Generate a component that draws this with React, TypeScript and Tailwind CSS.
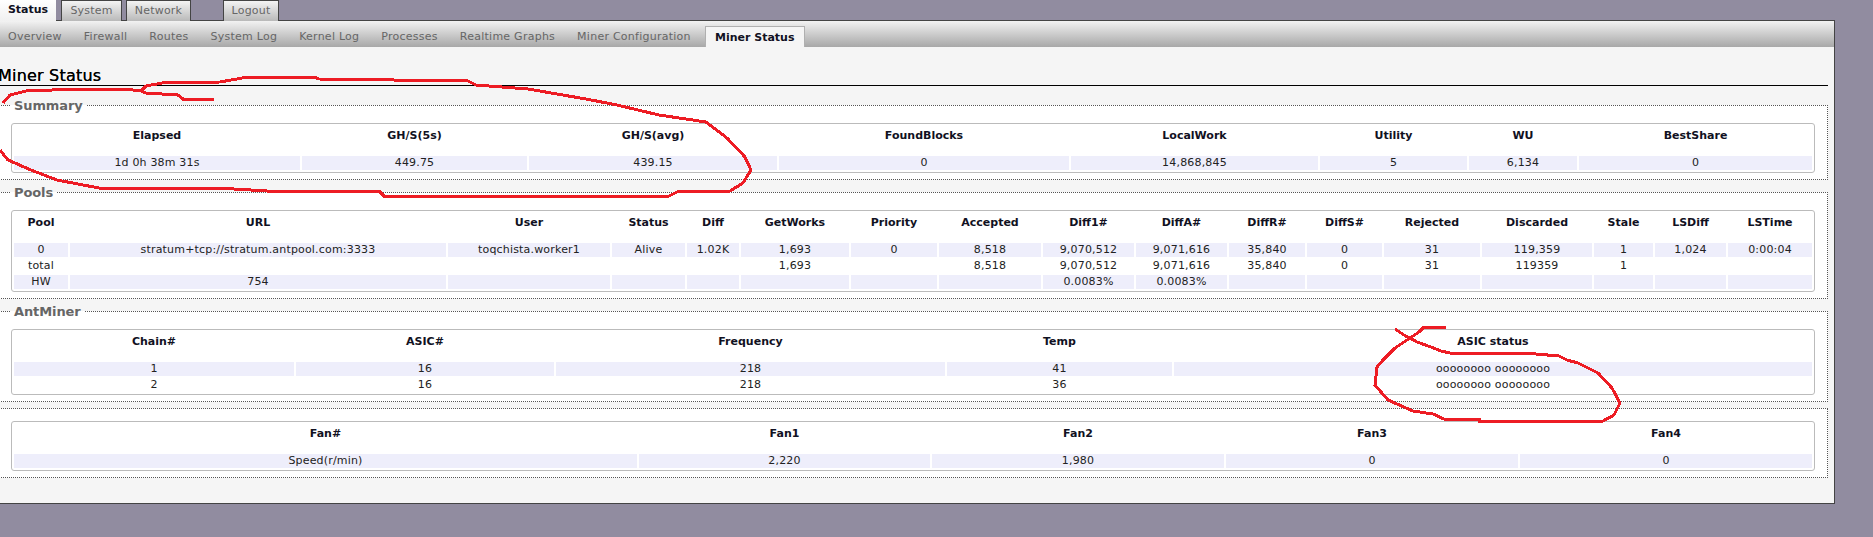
import React from "react";

type TableProps = { cols: string; head: string[]; rows: string[][] };

function DataTable({ cols, head, rows }: TableProps) {
  return (
    <div className="rounded-[3px] border border-[#bbbbbb] bg-white px-[2px] pb-[2px]">
      <div className={`grid gap-x-[2px] gap-y-[2px] ${cols}`}>
        {head.map((h, i) => (
          <div key={i} className="h-[30px] pt-[5px] text-center font-bold leading-[14px] text-[#111122]">
            {h}
          </div>
        ))}
        {rows.map((row, r) =>
          row.map((c, i) => (
            <div
              key={`${r}-${i}`}
              className={`h-[14px] whitespace-nowrap text-center leading-[14px] tracking-[0.18px] text-[#222222] ${r % 2 === 0 ? "bg-[#eeeefb]" : ""}`}
            >
              {c}
            </div>
          )),
        )}
      </div>
    </div>
  );
}

function Section({ title, children, className = "" }: { title?: string; children: React.ReactNode; className?: string }) {
  return (
    <fieldset className={`-ml-[2px] w-[1830px] border border-dotted border-[#555555] bg-white px-[12px] pb-[6px] ${title ? "pt-[11px]" : "pt-[12px]"} ${className}`}>
      {title && <legend className="h-[14px] px-[3px] pt-[1px] text-[13px] font-bold leading-[14px] tracking-[-0.1px] text-[#666666]">{title}</legend>}
      {children}
    </fieldset>
  );
}

const topTabs = [
  { label: "System", cls: "ml-[5px] w-[61px]" },
  { label: "Network", cls: "ml-[4px] w-[65px]" },
  { label: "Logout", cls: "ml-[32px] w-[56px]" },
];

const subTabs = ["Overview", "Firewall", "Routes", "System Log", "Kernel Log", "Processes", "Realtime Graphs", "Miner Configuration"];

const Ellipse1 =
  "214,99 183,99 178,95 146,93 141,91 125,89 78,89 26,91 10,95 3,103 M0,150 8,160 31,170 57,180 99,188 217,188 267,191 379,191 384,196 669,196 677,192 730,191 743,183 751,170 745,157 727,138 706,122 659,115 617,105 586,99 528,89 502,87 476,85 468,81 319,79 314,77 248,77 220,82 162,83 146,86 141,91";
const Ellipse2 =
  "1446,327 1424,327 1419,332 1410,338 1395,348 1383,360 1377,367 1375,385 1388,400 1413,411 1433,414 1444,419 1479,419 1479,421 1603,421 1614,415 1620,403 1612,388 1598,373 1578,363 1567,360 1559,356 1536,354 1534,353 1450,353 1441,351 1431,347 1417,342 1404,335 1395,329";

export default function App() {
  return (
    <div className="relative h-screen overflow-hidden bg-[#918ca0] font-['DejaVu_Sans',sans-serif] text-[11px]">
      <nav className="relative z-10 flex h-[21px] items-stretch">
        <div className="flex w-[56px] items-center justify-center bg-linear-to-b from-white to-[#f0f0f0] font-bold text-[#111122]">
          Status
        </div>
        {topTabs.map((t) => (
          <div
            key={t.label}
            className={`flex items-center justify-center border-x border-t border-[#444444] bg-linear-to-b from-[#f4f4f4] to-[#b9b9b9] tracking-[0.2px] text-[#666666] ${t.cls}`}
          >
            {t.label}
          </div>
        ))}
      </nav>

      <main className="-mt-px w-[1835px] overflow-hidden border-y border-r border-[#444444] bg-[#f5f5f5] pb-[25px] pr-[4px]">
        <div className="-mr-[4px] flex h-[26px] items-end bg-linear-to-b from-[#f2f2f2] to-[#a8a8a8] pl-[8px] text-[#666666]">
          <ul className="flex h-[21px] items-center gap-x-[22px] pt-[2px] tracking-[0.25px]">
            {subTabs.map((t) => (
              <li key={t} className="whitespace-nowrap">{t}</li>
            ))}
          </ul>
          <div className="ml-[14px] flex h-[21px] w-[100px] items-center justify-center border-x border-t border-[#b0b0b0] bg-[#f5f5f5] pt-[2px] font-bold text-[#111122]">
            Miner Status
          </div>
        </div>

        <h2 className="-ml-[2px] mb-[12px] mt-[18px] h-[21px] w-[1830px] border-b border-black pt-[1px] text-[16px] leading-[20px] tracking-[0.2px] text-black [text-shadow:0_0_0.5px_black]">
          Miner Status
        </h2>

        <Section title="Summary" className="mb-[5px]">
          <DataTable
            cols="grid-cols-[286px_225px_248px_290px_247px_147px_108px_233px]"
            head={["Elapsed", "GH/S(5s)", "GH/S(avg)", "FoundBlocks", "LocalWork", "Utility", "WU", "BestShare"]}
            rows={[["1d 0h 38m 31s", "449.75", "439.15", "0", "14,868,845", "5", "6,134", "0"]]}
          />
        </Section>

        <Section title="Pools" className="mb-[5px]">
          <DataTable
            cols="grid-cols-[54px_376px_162px_73px_52px_108px_86px_102px_91px_91px_76px_75px_96px_110px_59px_71px_84px]"
            head={["Pool", "URL", "User", "Status", "Diff", "GetWorks", "Priority", "Accepted", "Diff1#", "DiffA#", "DiffR#", "DiffS#", "Rejected", "Discarded", "Stale", "LSDiff", "LSTime"]}
            rows={[
              ["0", "stratum+tcp://stratum.antpool.com:3333", "toqchista.worker1", "Alive", "1.02K", "1,693", "0", "8,518", "9,070,512", "9,071,616", "35,840", "0", "31", "119,359", "1", "1,024", "0:00:04"],
              ["total", "", "", "", "", "1,693", "", "8,518", "9,070,512", "9,071,616", "35,840", "0", "31", "119359", "1", "", ""],
              ["HW", "754", "", "", "", "", "", "", "0.0083%", "0.0083%", "", "", "", "", "", "", ""],
            ]}
          />
        </Section>

        <Section title="AntMiner" className="mb-[6px]">
          <DataTable
            cols="grid-cols-[280px_258px_389px_225px_638px]"
            head={["Chain#", "ASIC#", "Frequency", "Temp", "ASIC status"]}
            rows={[
              ["1", "16", "218", "41", "oooooooo oooooooo"],
              ["2", "16", "218", "36", "oooooooo oooooooo"],
            ]}
          />
        </Section>

        <Section>
          <DataTable
            cols="grid-cols-[623px_291px_292px_292px_292px]"
            head={["Fan#", "Fan1", "Fan2", "Fan3", "Fan4"]}
            rows={[["Speed(r/min)", "2,220", "1,980", "0", "0"]]}
          />
        </Section>
      </main>

      <svg className="pointer-events-none absolute left-0 top-0 z-20" width="1873" height="537" fill="none" stroke="#ed1c24" strokeWidth="3" shapeRendering="crispEdges">
        <path d={`M${Ellipse1}`} />
        <path d={`M${Ellipse2}`} />
      </svg>
    </div>
  );
}
